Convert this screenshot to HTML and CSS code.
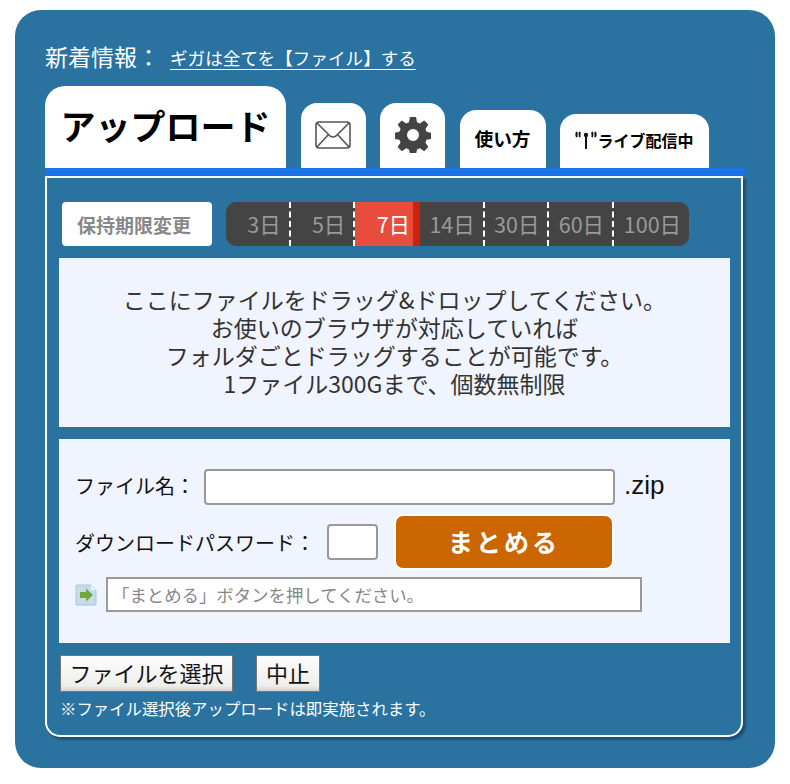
FILE: index.html
```html
<!DOCTYPE html>
<html lang="ja">
<head>
    <meta charset="UTF-8">
    <meta name="viewport" content="width=device-width, initial-scale=1.0">
    <title>アップロード</title>
    <link rel="stylesheet" href="styles.css">
</head>
<body>
    <div class="panel">
        <div class="news">
            <span class="news-label">新着情報：</span>
            <a class="news-link" href="#">ギガは全てを【ファイル】する</a>
        </div>

        <div class="tabs">
            <a class="tab tab-upload" href="#">アップロード</a>
            <a class="tab tab-mail" href="#">
                <svg width="36" height="28" viewBox="0 0 36 28" fill="none" stroke="#555" stroke-width="1.6">
                    <rect x="1" y="1" width="34" height="26" rx="3"/>
                    <path d="M2 2 L15 15 Q18 17 21 15 L34 2"/>
                    <path d="M2 26 L13.5 13.5"/>
                    <path d="M34 26 L22.5 13.5"/>
                </svg>
            </a>
            <a class="tab tab-gear" href="#">
                <svg width="36" height="36" viewBox="0 0 36 36">
                    <path fill="#444" fill-rule="evenodd" d="M15 0h6l1 5.2 2.8 1.2 4.4-3 4.2 4.2-3 4.4 1.2 2.8 5.2 1v6l-5.2 1-1.2 2.8 3 4.4-4.2 4.2-4.4-3-2.8 1.2-1 5.2h-6l-1-5.2-2.8-1.2-4.4 3-4.2-4.2 3-4.4-1.2-2.8-5.2-1v-6l5.200-1 1.200-2.800-3-4.400 4.200-4.200 4.400 3 2.800-1.200z M18 12a6 6 0 1 0 0 12a6 6 0 1 0 0-12z"/>
                </svg>
            </a>
            <a class="tab tab-help" href="#">使い方</a>
            <a class="tab tab-live" href="#">
                <svg width="22" height="18" viewBox="0 0 22 18" fill="none" stroke="#111" stroke-width="2">
                    <path d="M2 1 Q0.800 3.500 2 6"/>
                    <path d="M5 1 Q3.800 3.500 5 6"/>
                    <path d="M17 1 Q18.200 3.500 17 6"/>
                    <path d="M20 1 Q21.200 3.500 20 6"/>
                    <path d="M11 3 V18"/>
                    <circle cx="11" cy="4" r="2.200" fill="#111" stroke="none"/>
                </svg>
                <span>ライブ配信中</span>
            </a>
        </div>

        <div class="upload-box">
            <div class="upload-inner">
                <div class="period">
                    <button class="period-label">保持期限変更</button>
                    <ul class="period-list">
                        <li>3日</li>
                        <li>5日</li>
                        <li class="active">7日</li>
                        <li>14日</li>
                        <li>30日</li>
                        <li>60日</li>
                        <li class="last">100日</li>
                    </ul>
                </div>

                <div class="drop-area">
                    <p>ここにファイルをドラッグ&amp;ドロップしてください。</p>
                    <p>お使いのブラウザが対応していれば</p>
                    <p>フォルダごとドラッグすることが可能です。</p>
                    <p>1ファイル300Gまで、個数無制限</p>
                </div>

                <div class="form-area">
                    <div class="form-row row-name">
                        <label class="form-label">ファイル名：</label>
                        <input class="text-input input-name" type="text">
                        <span class="ext">.zip</span>
                    </div>
                    <div class="form-row row-pass">
                        <label class="form-label">ダウンロードパスワード：</label>
                        <input class="text-input input-pass" type="text">
                        <button class="btn-merge">まとめる</button>
                    </div>
                    <div class="form-row row-status">
                        <svg class="status-icon" width="22" height="22" viewBox="0 0 22 22">
                            <path d="M1 2 Q1 1 2 1 H16 L21 6 V20 Q21 21 20 21 H2 Q1 21 1 20 Z" fill="#c4dcec" stroke="#a9c6da"/>
                            <path d="M16 1 L21 6 H16 Z" fill="#eef5fa"/>
                            <path d="M5 8 H11 V4.500 L18 11 L11 17.500 V14 H5 Z" fill="#6fa83c"/>
                        </svg>
                        <input class="status-input" type="text" readonly value="「まとめる」ボタンを押してください。">
                    </div>
                </div>

                <div class="file-buttons">
                    <button class="btn-file">ファイルを選択</button>
                    <button class="btn-file btn-stop">中止</button>
                </div>
                <p class="note">※ファイル選択後アップロードは即実施されます。</p>
            </div>
        </div>
    </div>
</body>
</html>
```

FILE: styles.css
```css
body {
    margin: 0;
    padding: 0;
    background: white;
    font-family: "Noto Sans CJK JP", "Noto Sans", sans-serif;
}

.panel {
    width: 700px;
    height: 728px;
    margin: 10px 15px 0;
    padding: 30px 30px 0;
    background: #2a72a0;
    border-radius: 26px;
}

/* news line */
.news {
    display: flex;
    align-items: center;
    height: 34px;
    margin-bottom: 12px;
    color: white;
}

.news-label {
    width: 125px;
    margin-bottom: 3px;
    font-size: 23px;
    line-height: 34px;
}

.news-link {
    color: white;
    font-size: 17.6px;
    line-height: 22px;
    text-decoration: none;
    border-bottom: 1px solid white;
    margin-top: 2px;
}

/* tabs */
.tabs {
    display: flex;
    align-items: flex-end;
    gap: 14.5px;
    height: 82px;
}

.tab {
    display: flex;
    align-items: center;
    justify-content: center;
    background: white;
    color: black;
    text-decoration: none;
    font-weight: bold;
    border-radius: 16px 16px 0 0;
    box-sizing: border-box;
}

.tab-upload {
    width: 241px;
    height: 82px;
    padding-bottom: 6px;
    font-size: 35px;
    border-radius: 20px 20px 0 0;
}

.tab-mail,
.tab-gear {
    width: 65px;
    height: 65px;
    padding-bottom: 2px;
}

.tab-help {
    width: 86px;
    height: 58px;
    padding-bottom: 3px;
    font-size: 18.7px;
}

.tab-live {
    width: 149px;
    height: 54px;
    padding-bottom: 3px;
    font-size: 16px;
}

/* upload box */
.upload-box {
    border-top: 7px solid #1a73e8;
}

.upload-inner {
    width: 671px;
    height: 533px;
    margin-top: 1px;
    padding: 24px 11px 0 12px;
    border: 2px solid white;
    border-radius: 0 0 15px 15px;
    box-shadow: 3px 3px 2px rgba(0, 0, 0, 0.3);
}

.period {
    display: flex;
    gap: 14px;
    height: 44px;
    margin-bottom: 12px;
    padding-left: 3px;
}

.period-label {
    width: 150px;
    height: 44px;
    padding: 0 6px 0 0;
    background: white;
    border: none;
    border-radius: 4px;
    color: #888;
    font-family: inherit;
    font-size: 19px;
    font-weight: bold;
}

.period-list {
    display: flex;
    margin: 0;
    padding: 0;
    list-style: none;
    background: #444;
    border-radius: 10px;
    overflow: hidden;
}

.period-list li {
    width: 64.700px;
    height: 44px;
    box-sizing: border-box;
    padding-right: 8px;
    text-align: right;
    font-size: 21.5px;
    line-height: 44px;
    color: #999;
    border-right: 2px dashed white;
}

.period-list li.active {
    padding-right: 3px;
    color: white;
    background: #e74c3c;
    border-right: 7px solid #d0210f;
}

.period-list li.last {
    width: 75px;
    border-right: none;
}

.drop-area {
    height: 169px;
    box-sizing: border-box;
    padding-top: 27px;
    margin-bottom: 12px;
    background: #f0f4ff;
    color: #333;
    text-align: center;
    font-size: 23px;
    line-height: 28px;
}

.drop-area p {
    margin: 0;
}

.form-area {
    height: 204px;
    box-sizing: border-box;
    padding: 30px 0 0 16px;
    margin-bottom: 12px;
    background: #f0f4ff;
    color: #111;
}

.form-row {
    display: flex;
    align-items: center;
}

.form-label {
    font-size: 20px;
}

.row-name {
    height: 36px;
}

.row-name .form-label {
    width: 129px;
    margin-bottom: 4px;
}

.row-pass {
    height: 54px;
    margin-top: 10px;
}

.row-pass .form-label {
    width: 252px;
}

.row-status {
    height: 35px;
    margin-top: 8px;
}

.text-input {
    height: 36px;
    box-sizing: border-box;
    padding: 0 6px;
    background: white;
    border: 2px solid #999;
    border-radius: 4px;
}

.input-name {
    width: 411px;
}

.input-pass {
    width: 51px;
}

.ext {
    margin-left: 9px;
    margin-bottom: 4px;
    font-family: "Liberation Sans", sans-serif;
    font-size: 26px;
}

.btn-merge {
    flex: none;
    width: 220px;
    height: 56px;
    margin-left: 16px;
    padding: 0 0 3px;
    background: #cc6600;
    border: 2px solid white;
    border-radius: 9px;
    color: white;
    font-family: inherit;
    font-size: 25px;
    font-weight: bold;
    letter-spacing: 3px;
}

.status-icon {
    margin-right: 9px;
}

.status-input {
    width: 536px;
    height: 35px;
    box-sizing: border-box;
    padding: 0 4px;
    background: white;
    border: 2px solid #999;
    color: #888;
    font-family: inherit;
    font-size: 17.4px;
}

.file-buttons {
    display: flex;
    gap: 23px;
    padding-left: 1px;
}

.btn-file {
    width: 173px;
    height: 37px;
    padding: 0 0 4px;
    background: linear-gradient(#fdfdfd, #eeeeea 85%, #d8cfc8);
    border: 1px solid #777;
    color: #111;
    font-family: inherit;
    font-size: 22px;
    line-height: 30px;
}

.btn-stop {
    width: 64px;
}

.note {
    margin: 5px 0 0 1px;
    color: white;
    font-size: 16.4px;
    line-height: 22px;
}
```
